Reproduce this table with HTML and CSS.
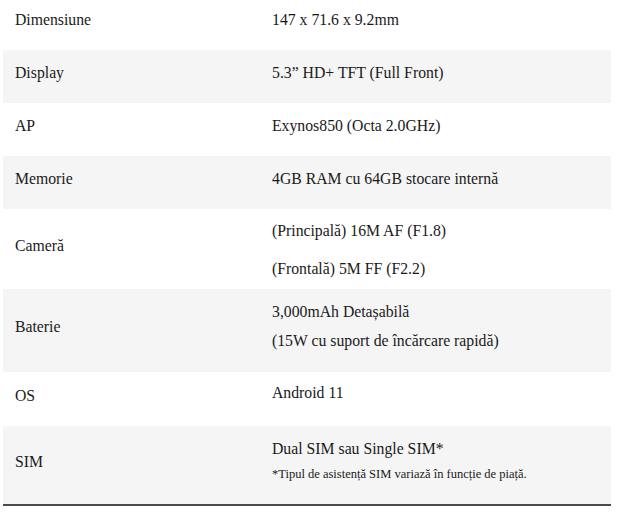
FILE: index.html
```html
<!DOCTYPE html>
<html lang="ro">
<head>
<meta charset="utf-8">
<title>Specificații</title>
<link rel="stylesheet" href="styles.css">
</head>
<body>
<table class="specs">
  <tr class="row">
    <th class="label">Dimensiune</th>
    <td class="value">147 x 71.6 x 9.2mm</td>
  </tr>
  <tr class="row alt">
    <th class="label">Display</th>
    <td class="value">5.3” HD+ TFT (Full Front)</td>
  </tr>
  <tr class="row">
    <th class="label">AP</th>
    <td class="value">Exynos850 (Octa 2.0GHz)</td>
  </tr>
  <tr class="row alt">
    <th class="label">Memorie</th>
    <td class="value">4GB RAM cu 64GB stocare internă</td>
  </tr>
  <tr class="row">
    <th class="label">Cameră</th>
    <td class="value multi camera">
      <p class="line">(Principală) 16M AF (F1.8)</p>
      <p class="line">(Frontală) 5M FF (F2.2)</p>
    </td>
  </tr>
  <tr class="row alt">
    <th class="label">Baterie</th>
    <td class="value multi battery">
      <p class="line">3,000mAh Detașabilă</p>
      <p class="line">(15W cu suport de încărcare rapidă)</p>
    </td>
  </tr>
  <tr class="row">
    <th class="label">OS</th>
    <td class="value os">Android 11</td>
  </tr>
  <tr class="row alt last">
    <th class="label">SIM</th>
    <td class="value multi sim">
      <p class="line">Dual SIM sau Single SIM*</p>
      <p class="note">*Tipul de asistență SIM variază în funcție de piață.</p>
    </td>
  </tr>
</table>
</body>
</html>
```
FILE: styles.css
```css
html, body {
  margin: 0;
  padding: 0;
  background: #ffffff;
}

body {
  font-family: "Liberation Serif", "Times New Roman", serif;
  font-size: 15.75px;
  color: #1a1a1a;
}

.specs {
  width: 608px;
  margin: -3px 0 0 3px;
  border-collapse: collapse;
  table-layout: fixed;
}

.row {
  background: #ffffff;
}

.row.alt {
  background: #f5f5f5;
}

.row.last {
  border-bottom: 2px solid #4a4a4a;
}

.label,
.value {
  padding: 14px 12px 22px;
  line-height: 17px;
  font-weight: normal;
  text-align: left;
  vertical-align: middle;
}

.label {
  width: 233px;
}

.line,
.note {
  margin: 0;
}

.camera {
  padding-top: 13px;
  padding-bottom: 12px;
}

.camera .line + .line {
  margin-top: 21px;
}

.battery {
  padding-top: 14px;
  padding-bottom: 23px;
}

.battery .line + .line {
  margin-top: 12px;
}

.value.os {
  padding-top: 12px;
  padding-bottom: 25px;
}

.sim {
  padding-top: 14px;
  padding-bottom: 23px;
}

.note {
  margin-top: 10px;
  font-size: 12.5px;
  line-height: 14px;
}
```
